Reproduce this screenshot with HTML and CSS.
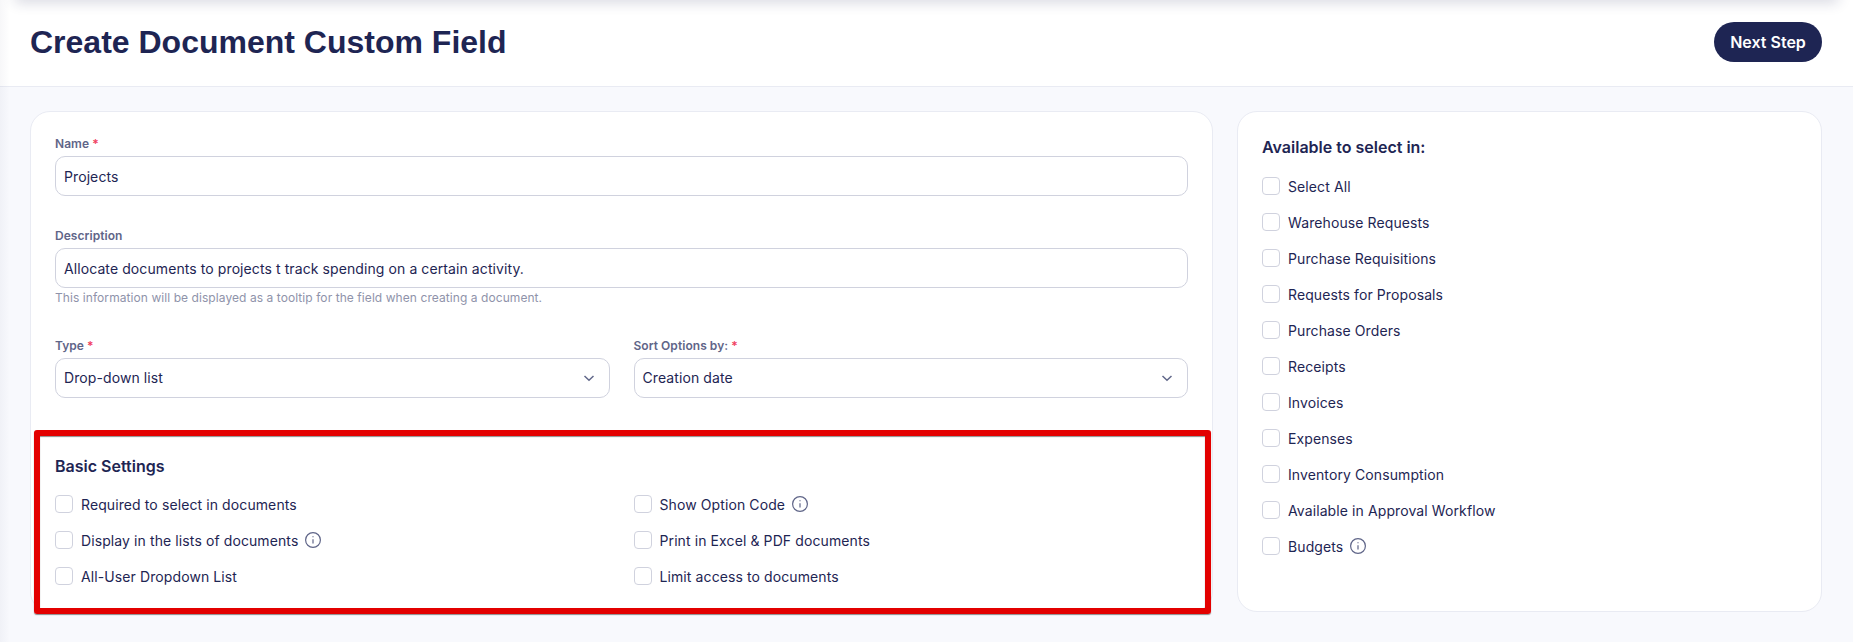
FILE: index.html
```html
<!DOCTYPE html>
<html lang="en">
<head>
<meta charset="utf-8">
<title>Create Document Custom Field</title>
<link rel="stylesheet" href="styles.css">
</head>
<body>
<header class="page-header">
  <h1 class="page-title">Create Document Custom Field</h1>
  <button class="primary-btn" type="button">Next Step</button>
</header>
<main class="content">
  <section class="card main-card">
    <div class="field name-field">
      <label class="field-label">Name <span class="req">*</span></label>
      <div class="input">Projects</div>
    </div>
    <div class="field desc-field">
      <label class="field-label">Description</label>
      <div class="input">Allocate documents to projects t track spending on a certain activity.</div>
      <p class="hint">This information will be displayed as a tooltip for the field when creating a document.</p>
    </div>
    <div class="two-cols">
      <div class="field">
        <label class="field-label">Type <span class="req">*</span></label>
        <div class="input select">Drop-down list
          <svg class="chevron" viewBox="0 0 12 12"><path d="M1.5 4l4.5 4.2L10.500 4"/></svg>
        </div>
      </div>
      <div class="field">
        <label class="field-label">Sort Options by: <span class="req">*</span></label>
        <div class="input select">Creation date
          <svg class="chevron" viewBox="0 0 12 12"><path d="M1.5 4l4.5 4.2L10.500 4"/></svg>
        </div>
      </div>
    </div>
    <div class="settings">
      <h2 class="section-title">Basic Settings</h2>
      <div class="settings-grid">
        <div class="check-row"><span class="box"></span>Required to select in documents</div>
        <div class="check-row"><span class="box"></span>Show Option Code
          <svg class="info" viewBox="0 0 16 16"><circle cx="8" cy="8" r="7.400"/><path d="M8 7.200v4.300"/><path d="M8 4.300v.9"/></svg>
        </div>
        <div class="check-row"><span class="box"></span>Display in the lists of documents
          <svg class="info" viewBox="0 0 16 16"><circle cx="8" cy="8" r="7.400"/><path d="M8 7.200v4.300"/><path d="M8 4.300v.9"/></svg>
        </div>
        <div class="check-row"><span class="box"></span>Print in Excel &amp; PDF documents</div>
        <div class="check-row"><span class="box"></span>All-User Dropdown List</div>
        <div class="check-row"><span class="box"></span>Limit access to documents</div>
      </div>
    </div>
  </section>
  <aside class="card side-card">
    <h2 class="section-title side-title">Available to select in:</h2>
    <div class="check-row"><span class="box"></span>Select All</div>
    <div class="check-row"><span class="box"></span>Warehouse Requests</div>
    <div class="check-row"><span class="box"></span>Purchase Requisitions</div>
    <div class="check-row"><span class="box"></span>Requests for Proposals</div>
    <div class="check-row"><span class="box"></span>Purchase Orders</div>
    <div class="check-row"><span class="box"></span>Receipts</div>
    <div class="check-row"><span class="box"></span>Invoices</div>
    <div class="check-row"><span class="box"></span>Expenses</div>
    <div class="check-row"><span class="box"></span>Inventory Consumption</div>
    <div class="check-row"><span class="box"></span>Available in Approval Workflow</div>
    <div class="check-row"><span class="box"></span>Budgets
      <svg class="info" viewBox="0 0 16 16"><circle cx="8" cy="8" r="7.400"/><path d="M8 7.200v4.300"/><path d="M8 4.300v.9"/></svg>
    </div>
  </aside>
</main>
</body>
</html>
```

FILE: styles.css
```css
* { box-sizing: border-box; }
html, body { margin: 0; height: 100%; }
body {
  background: #f8f9fd;
  color: #1e2553;
  font-family: Inter, "Liberation Sans", sans-serif;
  font-size: 14px;
  height: 642px;
  overflow: hidden;
  position: relative;
}
body::before {
  content: "";
  position: absolute;
  left: 15px;
  right: 15px;
  top: -12px;
  height: 12px;
  box-shadow: 0 2px 14px rgba(30, 37, 83, .2);
}
body::after {
  content: "";
  position: absolute;
  left: 0;
  top: 0;
  bottom: 0;
  width: 10px;
  background: linear-gradient(to right, rgba(30, 37, 83, .035), rgba(30, 37, 83, 0));
}
.page-header {
  height: 87px;
  background: #fff;
  border-bottom: 1px solid #e9ebf3;
  display: flex;
  align-items: center;
  justify-content: space-between;
  padding: 0 31px 2px 30px;
}
.page-title {
  margin: 0;
  font-family: "Liberation Sans", Arial, sans-serif;
  font-size: 32px;
  font-weight: 700;
  color: #1e2553;
}
.primary-btn {
  width: 108px;
  height: 40px;
  border: 0;
  border-radius: 20px;
  background: #1e2553;
  color: #fff;
  font-family: Inter, sans-serif;
  font-size: 16px;
  font-weight: 600;
}
.content {
  display: flex;
  gap: 24px;
  padding: 24px 31px 0 30px;
}
.card {
  background: #fff;
  border: 1px solid #e9ebf3;
  border-radius: 20px;
  height: 501px;
}
.main-card {
  width: 1183px;
  padding: 25px 24px 0;
}
.side-card {
  flex: 1;
  padding: 26px 24px 0;
}
.field-label {
  display: block;
  color: #5f6588;
  font-size: 12px;
  font-weight: 600;
  letter-spacing: .05px;
  line-height: 14px;
  margin-bottom: 5px;
}
.req { color: #f0405f; }
.input {
  height: 40px;
  border: 1px solid #d0d2de;
  border-radius: 10px;
  padding: 0 8px;
  display: flex;
  align-items: center;
  justify-content: space-between;
  background: #fff;
  color: #1e2553;
  font-size: 14px;
  letter-spacing: .09px;
}
.select { padding-bottom: 1px; }
.name-field { margin-bottom: 33px; }
.hint {
  margin: 3px 0 0;
  color: #8f93aa;
  font-size: 12px;
  letter-spacing: .07px;
  line-height: 14px;
}
.desc-field { margin-bottom: 34px; }
.two-cols {
  display: grid;
  grid-template-columns: 1fr 1fr;
  gap: 24px;
}
.chevron {
  width: 12px;
  height: 12px;
  margin-right: 6px;
  fill: none;
  stroke: #62688a;
  stroke-width: 1.500;
}
.settings {
  margin-top: 59px;
  position: relative;
}
.section-title {
  margin: 0;
  font-size: 16px;
  font-weight: 600;
  line-height: 18px;
  color: #1e2553;
}
.settings-grid {
  display: grid;
  grid-template-columns: 1fr 1fr;
  column-gap: 24px;
  margin-top: 11px;
}
.settings::before {
  content: "";
  position: absolute;
  left: -21px;
  right: -23px;
  top: -27px;
  bottom: -20px;
  border: 6px solid #e30000;
  border-radius: 3px;
  box-shadow: 0 1px 1px rgba(30,30,30,.5), inset 0 1px 1px rgba(30,30,30,.5);
  pointer-events: none;
}
.check-row {
  height: 36px;
  display: flex;
  align-items: center;
  gap: 8px;
  color: #1e2553;
  font-size: 14px;
  letter-spacing: .1px;
}
.box {
  width: 18px;
  height: 18px;
  flex: none;
  border: 1px solid #d0d2de;
  border-radius: 4px;
  background: #fff;
}
.info {
  width: 16px;
  height: 16px;
  margin-left: -1px;
  fill: none;
  stroke: #5f6588;
  stroke-width: 1.200;
}
.side-title { margin-bottom: 12px; }
```
